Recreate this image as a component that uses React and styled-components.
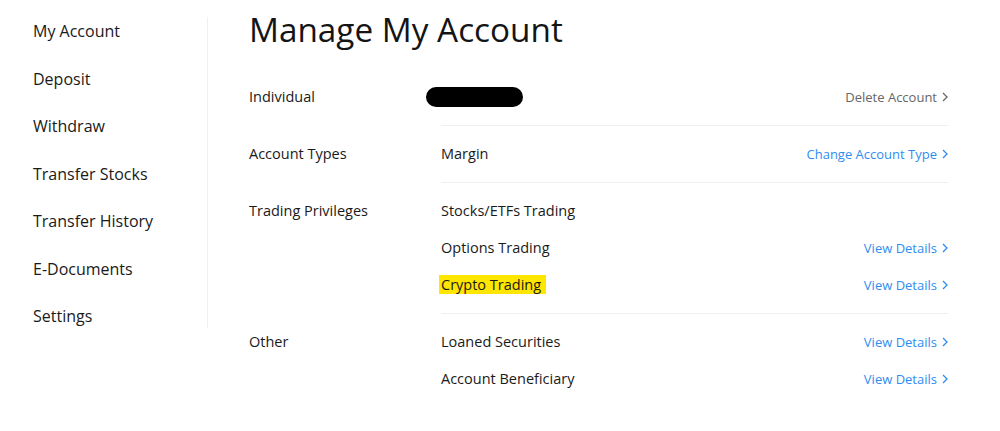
import styled, { createGlobalStyle } from 'styled-components';

const GlobalStyle = createGlobalStyle`
  body {
    margin: 0;
    background: #fff;
    font-family: 'Open Sans', 'Noto Sans', sans-serif;
    color: #1a1a1a;
  }
`;

const Page = styled.div`
  display: flex;
  align-items: flex-start;
  width: 1000px;
`;

const Sidebar = styled.nav`
  width: 208px;
  box-sizing: border-box;
  margin-top: 17px;
  padding: 2px 0 0 33px;
  border-right: 1px solid #eef0f3;
  display: flex;
  flex-direction: column;
  gap: 23.5px;
`;

const NavItem = styled.a`
  font-size: 16px;
  line-height: 24px;
  color: #1a1a1a;
  text-decoration: none;
  cursor: pointer;
`;

const Main = styled.main`
  width: 699px;
  margin-left: 41px;
  padding-top: 9px;
`;

const Title = styled.h1`
  margin: 0 0 19px;
  font-size: 33.3px;
  line-height: 40px;
  font-weight: 400;
  color: #141414;
`;

const Section = styled.div`
  display: grid;
  grid-template-columns: 192px 1fr;
`;

const Label = styled.div`
  padding-top: ${({ $first }) => ($first ? '10px' : '9px')};
  font-size: 14.5px;
  line-height: 37px;
`;

const Rows = styled.div`
  padding: ${({ $first }) => ($first ? '10px' : '9px')} 0 10px;
  border-bottom: ${({ $last }) => ($last ? 'none' : '1px solid #eeeff1')};
`;

const Row = styled.div`
  display: flex;
  align-items: center;
  justify-content: space-between;
  height: 37px;
`;

const Value = styled.span`
  font-size: 14.5px;
  line-height: 19px;
  padding: 0 5px 0 2px;
  margin-left: -2px;
  background: ${({ $highlight }) => ($highlight ? '#ffe600' : 'transparent')};
`;

const Redacted = styled.span`
  display: inline-block;
  width: 97px;
  height: 20px;
  border-radius: 10px;
  background: #000;
  margin-left: -15px;
`;

const Action = styled.a`
  display: inline-flex;
  align-items: center;
  gap: 5px;
  font-size: 13px;
  color: ${({ $muted }) => ($muted ? '#666' : '#2f8df2')};
  text-decoration: none;
  cursor: pointer;
`;

const Chevron = () => (
  <svg width="6" height="10" viewBox="0 0 6 10" fill="none">
    <path d="M1 1l4 4-4 4" stroke="currentColor" strokeWidth="1.3" />
  </svg>
);

const nav = ['My Account', 'Deposit', 'Withdraw', 'Transfer Stocks', 'Transfer History', 'E-Documents', 'Settings'];

const sections = [
  { label: 'Individual', rows: [{ redacted: true, action: 'Delete Account', muted: true }] },
  { label: 'Account Types', rows: [{ value: 'Margin', action: 'Change Account Type' }] },
  {
    label: 'Trading Privileges',
    rows: [
      { value: 'Stocks/ETFs Trading' },
      { value: 'Options Trading', action: 'View Details' },
      { value: 'Crypto Trading', action: 'View Details', highlight: true },
    ],
  },
  {
    label: 'Other',
    rows: [
      { value: 'Loaned Securities', action: 'View Details' },
      { value: 'Account Beneficiary', action: 'View Details' },
    ],
  },
];

export default function App() {
  return (
    <>
      <GlobalStyle />
      <Page>
        <Sidebar>
          {nav.map((item) => (
            <NavItem key={item}>{item}</NavItem>
          ))}
        </Sidebar>
        <Main>
          <Title>Manage My Account</Title>
          {sections.map((s, i) => (
            <Section key={s.label}>
              <Label $first={i === 0}>{s.label}</Label>
              <Rows $first={i === 0} $last={i === sections.length - 1}>
                {s.rows.map((r, j) => (
                  <Row key={j}>
                    {r.redacted ? <Redacted /> : <Value $highlight={r.highlight}>{r.value}</Value>}
                    {r.action && (
                      <Action $muted={r.muted}>
                        {r.action}
                        <Chevron />
                      </Action>
                    )}
                  </Row>
                ))}
              </Rows>
            </Section>
          ))}
        </Main>
      </Page>
    </>
  );
}
